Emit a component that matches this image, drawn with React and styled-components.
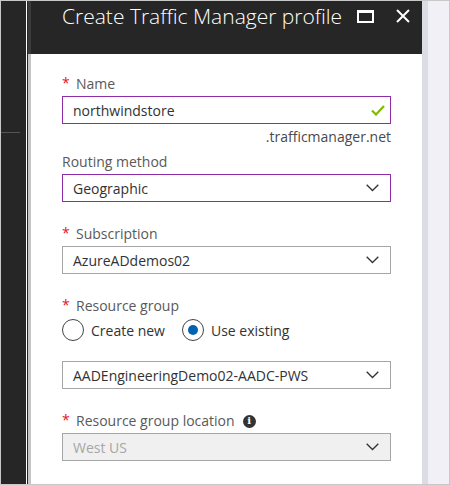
import React from "react";
import styled, { createGlobalStyle } from "styled-components";

const Global = createGlobalStyle`
  html, body { margin: 0; padding: 0; background: #fff; }
  * { box-sizing: border-box; }
`;

const Frame = styled.div`
  width: 450px;
  height: 485px;
  border: 1px solid #c8c8c8;
  display: flex;
  overflow: hidden;
  font-family: "Open Sans", "Noto Sans", sans-serif;
`;

const Sidebar = styled.div`
  width: 26px;
  flex: none;
  background: #262626;
  border-right: 1px solid #ffffff;
  padding-top: 131px;
`;

const SideRule = styled.div`
  width: 19px;
  height: 1px;
  background: #555555;
`;

const Blade = styled.div`
  width: 395px;
  flex: none;
  display: flex;
  flex-direction: column;
`;

const Header = styled.div`
  height: 53px;
  flex: none;
  display: flex;
  align-items: flex-start;
  padding: 1px 12px 0 35px;
  background: linear-gradient(to right, #262626 1px, #3b3b3b 1px, #3b3b3b 4px, #262626 4px);
`;

const Title = styled.h1`
  flex: 1;
  margin: 0;
  font-family: "Open Sans", sans-serif;
  font-weight: 300;
  font-size: 21px;
  line-height: 29px;
  color: #ffffff;
  white-space: nowrap;
`;

const HeaderButtons = styled.div`
  display: flex;
  align-items: center;
  gap: 22px;
  margin-top: 7px;
`;

const IconButton = styled.span`
  display: flex;
  width: ${(p) => p.$w}px;
  height: 14px;
`;

const Body = styled.div`
  flex: 1;
  padding: 20px 31px 0 35px;
  background: linear-gradient(to right, #262626 1px, #c4c4c4 1px, #c4c4c4 4px, #ffffff 4px);
  display: flex;
  flex-direction: column;
`;

const Field = styled.div`
  display: flex;
  flex-direction: column;
  margin-top: ${(p) => p.$gap || 0}px;
`;

const Label = styled.div`
  display: flex;
  align-items: center;
  height: 20px;
  font-size: 14px;
  line-height: 20px;
  color: #595959;
  margin-bottom: 2px;
  white-space: nowrap;
`;

const Star = styled.span`
  color: #e81123;
  width: 14px;
  flex: none;
  margin-top: -3px;
`;

const Box = styled.div`
  display: flex;
  align-items: center;
  height: 28px;
  padding: 0 11px 0 10px;
  border: ${(p) => (p.$focused ? "1.5px solid #8f2da8" : "1px solid #a6a6a6")};
  background: ${(p) => (p.$disabled ? "#f0f0f0" : "#ffffff")};
  font-size: 14px;
  color: ${(p) => (p.$disabled ? "#a6a6a6" : "#323232")};
`;

const BoxText = styled.span`
  flex: 1;
  white-space: nowrap;
`;

const Hint = styled.div`
  margin-top: 3px;
  height: 20px;
  font-size: 14px;
  line-height: 20px;
  color: #4a4a4a;
  text-align: right;
`;

const RadioRow = styled.div`
  display: flex;
  align-items: center;
  height: 22px;
  margin-top: 1px;
`;

const RadioOption = styled.label`
  display: flex;
  align-items: center;
  gap: 7px;
  margin-right: 17px;
  font-size: 14px;
  color: #323232;
`;

const RadioCircle = styled.span`
  width: 22px;
  height: 22px;
  border-radius: 50%;
  border: 1px solid #444444;
  display: flex;
  align-items: center;
  justify-content: center;
  &::after {
    content: "";
    width: 10px;
    height: 10px;
    border-radius: 50%;
    background: ${(p) => (p.$checked ? "#0063b1" : "transparent")};
  }
`;

const InfoDot = styled.span`
  display: inline-flex;
  align-items: center;
  justify-content: center;
  width: 13px;
  height: 13px;
  margin-left: 8px;
  border-radius: 50%;
  background: #333333;
  color: #ffffff;
  font-family: "DejaVu Serif", serif;
  font-weight: bold;
  font-size: 10px;
  line-height: 1;
`;

const Gutter = styled.div`
  width: 6px;
  flex: none;
  background: #dcdce4;
`;

const Fill = styled.div`
  flex: 1;
  background: #f0f0f6;
`;

const Chevron = () => (
  <svg width="13" height="8" viewBox="0 0 13 8">
    <polyline points="0.7,0.7 6.5,6.5 12.3,0.7" fill="none" stroke="#333" strokeWidth="1.3" />
  </svg>
);

const Check = () => (
  <svg width="14" height="11" viewBox="0 0 14 11" style={{ marginRight: -6 }}>
    <polyline points="1,5.5 5,9.5 13,1" fill="none" stroke="#7fba00" strokeWidth="2.2" />
  </svg>
);

const Label1 = ({ required, children }) => (
  <Label>
    {required && <Star>*</Star>}
    {children}
  </Label>
);

export default function App() {
  return (
    <>
      <Global />
      <Frame>
        <Sidebar>
          <SideRule />
        </Sidebar>
        <Blade>
          <Header>
            <Title>Create Traffic Manager profile</Title>
            <HeaderButtons>
              <IconButton $w={17}>
                <svg width="17" height="14" viewBox="0 0 17 14">
                  <rect x="1" y="2" width="15" height="11" fill="none" stroke="#fff" strokeWidth="2" />
                  <rect x="0" y="1" width="17" height="3" fill="#fff" />
                </svg>
              </IconButton>
              <IconButton $w={14}>
                <svg width="14" height="14" viewBox="0 0 14 14">
                  <path d="M1 1 L13 13 M13 1 L1 13" stroke="#fff" strokeWidth="2" />
                </svg>
              </IconButton>
            </HeaderButtons>
          </Header>
          <Body>
            <Field>
              <Label1 required>Name</Label1>
              <Box $focused>
                <BoxText>northwindstore</BoxText>
                <Check />
              </Box>
              <Hint>.trafficmanager.net</Hint>
            </Field>
            <Field $gap={5}>
              <Label1>Routing method</Label1>
              <Box $focused>
                <BoxText>Geographic</BoxText>
                <Chevron />
              </Box>
            </Field>
            <Field $gap={22}>
              <Label1 required>Subscription</Label1>
              <Box>
                <BoxText>AzureADdemos02</BoxText>
                <Chevron />
              </Box>
            </Field>
            <Field $gap={22}>
              <Label1 required>Resource group</Label1>
              <RadioRow>
                <RadioOption>
                  <RadioCircle />
                  Create new
                </RadioOption>
                <RadioOption>
                  <RadioCircle $checked />
                  Use existing
                </RadioOption>
              </RadioRow>
            </Field>
            <Field $gap={20}>
              <Box>
                <BoxText>AADEngineeringDemo02-AADC-PWS</BoxText>
                <Chevron />
              </Box>
            </Field>
            <Field $gap={22}>
              <Label1 required>
                Resource group location
                <InfoDot>i</InfoDot>
              </Label1>
              <Box $disabled>
                <BoxText>West US</BoxText>
                <Chevron />
              </Box>
            </Field>
          </Body>
        </Blade>
        <Gutter />
        <Fill />
      </Frame>
    </>
  );
}
